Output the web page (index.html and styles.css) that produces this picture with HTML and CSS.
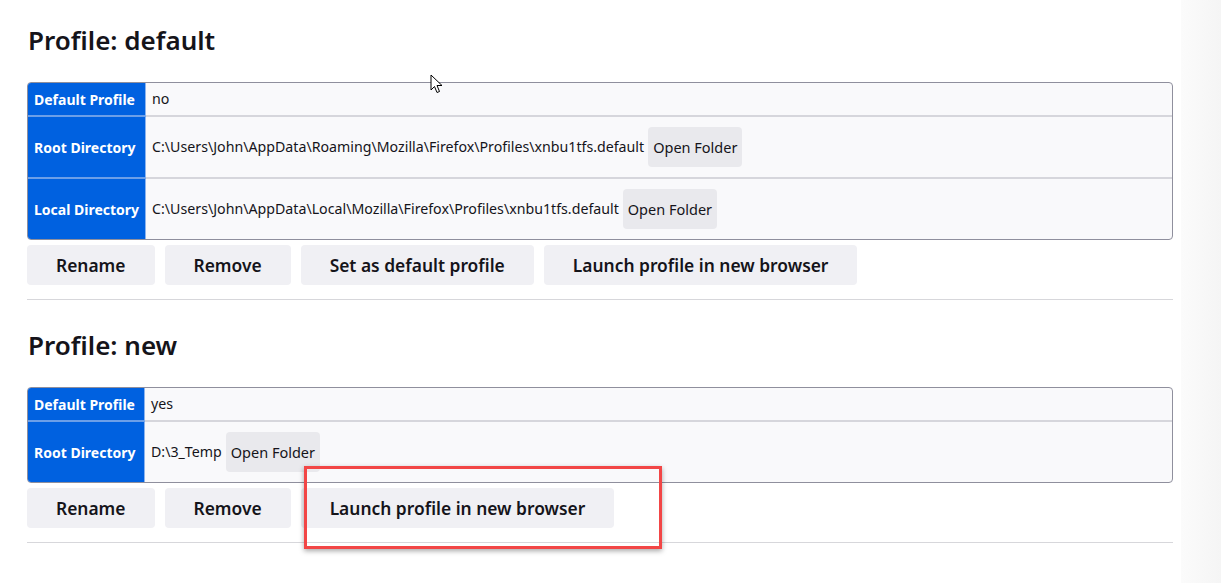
FILE: index.html
```html
<!DOCTYPE html>
<html>
<head>
<meta charset="utf-8">
<link rel="stylesheet" href="styles.css">
</head>
<body>
<main class="page">
  <section class="profile">
    <h2 class="title">Profile: default</h2>
    <table class="info">
      <tr><th>Default Profile</th><td><span class="cell">no</span></td></tr>
      <tr><th>Root Directory</th><td><span class="cell">C:\Users\John\AppData\Roaming\Mozilla\Firefox\Profiles\xnbu1tfs.default<button class="small">Open Folder</button></span></td></tr>
      <tr><th>Local Directory</th><td><span class="cell">C:\Users\John\AppData\Local\Mozilla\Firefox\Profiles\xnbu1tfs.default<button class="small">Open Folder</button></span></td></tr>
    </table>
    <div class="actions">
      <button class="btn">Rename</button>
      <button class="btn">Remove</button>
      <button class="btn">Set as default profile</button>
      <button class="btn">Launch profile in new browser</button>
    </div>
    <hr class="sep">
  </section>
  <section class="profile">
    <h2 class="title">Profile: new</h2>
    <table class="info">
      <tr><th>Default Profile</th><td><span class="cell">yes</span></td></tr>
      <tr><th>Root Directory</th><td><span class="cell">D:\3_Temp<button class="small">Open Folder</button></span></td></tr>
    </table>
    <div class="actions">
      <button class="btn">Rename</button>
      <button class="btn">Remove</button>
      <button class="btn">Launch profile in new browser</button>
    </div>
    <hr class="sep">
  </section>
</main>
<div class="highlight"></div>
<div class="edge"></div>
<svg class="cursor" width="14" height="20" viewBox="0 0 14 20"><path d="M1 1 L1 16 L4.5 12.5 L7 18.5 L9.5 17.5 L7 11.5 L12 11.5 Z" fill="#fff" stroke="#000" stroke-width="1" stroke-linejoin="round"/></svg>
</body>
</html>
```
FILE: styles.css
```css
html, body {
  margin: 0;
  padding: 0;
  background: #fff;
  color: #15141a;
  font-family: "Noto Sans", "Open Sans", sans-serif;
}
.page {
  width: 1146px;
  padding: 0 0 0 27px;
}
.profile {
  display: flex;
  flex-direction: column;
}
.title {
  font-size: 26px;
  font-weight: 600;
  margin: 22px 0 0 1px;
  line-height: 36px;
  height: 60px;
}
.info {
  width: 100%;
  border: 1px solid #8f8f9d;
  border-radius: 4px;
  border-spacing: 0;
  overflow: hidden;
  background: #f9f9fb;
}
.info th {
  width: 104px;
  background: #0061e0;
  color: #fff;
  font-size: 14px;
  font-weight: 700;
  text-align: left;
  white-space: nowrap;
  padding: 0 6px 0 6px;
  border-right: 1px solid #8cb4ee;
  border-bottom: 2px solid #6c9fe8;
}
.info td {
  font-size: 14.2px;
  padding: 6px 0 6px 6px;
  line-height: 20px;
  border-bottom: 2px solid #d6d6dc;
}
.info tr:last-child th, .info tr:last-child td { border-bottom: 0; }
.cell {
  display: flex;
  align-items: center;
}
.small {
  font-family: inherit;
  font-size: 14.5px;
  color: #15141a;
  background: #e9e9ed;
  border: 0;
  border-radius: 4px;
  height: 40px;
  padding: 0 5px;
  margin: 4px 0 4px 4px;
}
.actions {
  display: flex;
  gap: 10px;
  margin-top: 5px;
}
.btn {
  font-family: inherit;
  font-size: 17.4px;
  font-weight: 600;
  color: #15141a;
  background: #f0f0f4;
  border: 0;
  border-radius: 4px;
  height: 40px;
  padding: 0 29px;
}
.sep {
  width: 100%;
  margin: 14px 0 5px 0;
  border: 0;
  border-top: 1px solid #d7d7db;
}
.highlight {
  position: absolute;
  left: 304px;
  top: 466px;
  width: 352px;
  height: 77px;
  border: 3px solid #f24646;
  box-shadow: 0 2px 5px rgba(0,0,0,0.35);
}
.edge {
  position: absolute;
  top: 0;
  right: 0;
  width: 40px;
  height: 583px;
  background: linear-gradient(to right, #fbfbfb, #f5f5f5);
}
.cursor {
  position: absolute;
  left: 430px;
  top: 74px;
}
```
